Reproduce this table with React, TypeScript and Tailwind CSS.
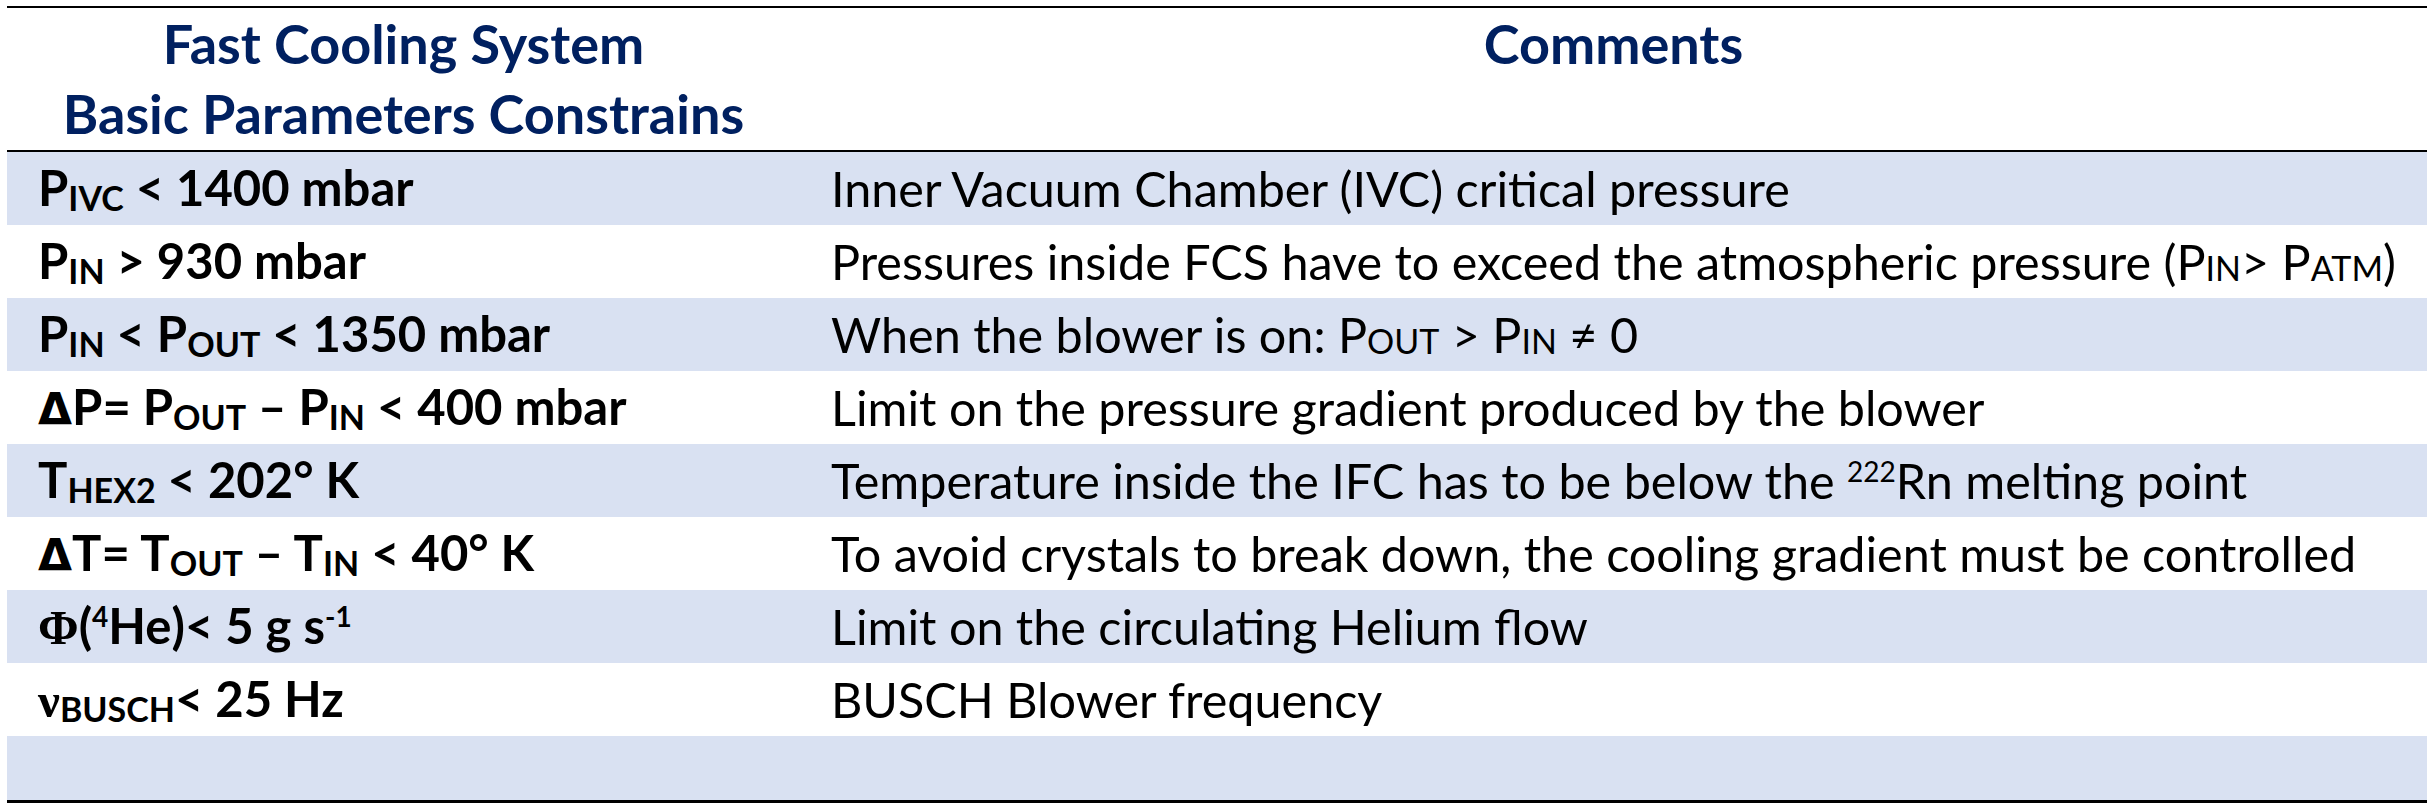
import React from 'react';

const Sub = ({ children, drop = true }: { children: React.ReactNode; drop?: boolean }) => (
  <span className={drop ? 'text-[34px] align-[-5px]' : 'text-[34px] align-[-1px]'}>{children}</span>
);

const Sup = ({ children }: { children: React.ReactNode }) => (
  <span className="text-[28px] align-[17px]">{children}</span>
);

const Greek = ({ children }: { children: React.ReactNode }) => (
  <span className="font-['Liberation_Serif',serif]">{children}</span>
);

const Delta = () => <span className="font-['DejaVu_Sans',sans-serif] text-[44px]">Δ</span>;

const App = () => {
  const rows = [
    {
      param: <>P<Sub>IVC</Sub> &lt; 1400 mbar</>,
      comment: <>Inner Vacuum Chamber (IVC) critical pressure</>,
    },
    {
      param: <>P<Sub>IN</Sub> &gt; 930 mbar</>,
      comment: (
        <>
          Pressures inside FCS have to exceed the atmospheric pressure (P<Sub drop={false}>IN</Sub>&gt; P
          <Sub drop={false}>ATM</Sub>)
        </>
      ),
    },
    {
      param: <>P<Sub>IN</Sub> &lt; P<Sub>OUT</Sub> &lt; 1350 mbar</>,
      comment: (
        <>
          When the blower is on: P<Sub drop={false}>OUT</Sub> &gt; P<Sub drop={false}>IN</Sub> ≠ 0
        </>
      ),
    },
    {
      param: <><Delta />P= P<Sub>OUT</Sub> – P<Sub>IN</Sub> &lt; 400 mbar</>,
      comment: <>Limit on the pressure gradient produced by the blower</>,
    },
    {
      param: <>T<Sub>HEX2</Sub> &lt; 202° K</>,
      comment: <>Temperature inside the IFC has to be below the <Sup>222</Sup>Rn melting point</>,
    },
    {
      param: <><Delta />T= T<Sub>OUT</Sub> – T<Sub>IN</Sub> &lt; 40° K</>,
      comment: <>To avoid crystals to break down, the cooling gradient must be controlled</>,
    },
    {
      param: <><Greek>Φ</Greek>(<Sup>4</Sup>He)&lt; 5 g s<Sup>-1</Sup></>,
      comment: <>Limit on the circulating Helium flow</>,
    },
    {
      param: <><Greek>ν</Greek><Sub>BUSCH</Sub>&lt; 25 Hz</>,
      comment: <>BUSCH Blower frequency</>,
    },
  ];

  return (
    <div className="w-[2434px] h-[812px] bg-white pt-[6px] px-[7px] font-['Lato',sans-serif] text-black">
      <div className="border-t-[2px] border-b-[3px] border-black">
        {/* Header */}
        <div className="grid grid-cols-[793px_1fr] h-[144px] border-b-[2px] border-black text-[#002060] font-bold text-[54px] leading-[70px] pt-[1px]">
          <div className="text-center">
            <div>Fast Cooling System</div>
            <div>Basic Parameters Constrains</div>
          </div>
          <div className="text-center">Comments</div>
        </div>

        {/* Rows */}
        {rows.map((row, index) => (
          <div
            key={index}
            className={`grid grid-cols-[793px_1fr] h-[73px] ${index % 2 === 0 ? 'bg-[#D9E1F2]' : 'bg-white'}`}
          >
            <div className="flex items-center pl-[31px] text-[49px] font-bold leading-none whitespace-nowrap">
              <span>{row.param}</span>
            </div>
            <div className="flex items-center pl-[31px] text-[48.5px] leading-none whitespace-nowrap">
              <span>{row.comment}</span>
            </div>
          </div>
        ))}
        <div className="h-[64px] bg-[#D9E1F2]"></div>
      </div>
    </div>
  );
};

export default App;
